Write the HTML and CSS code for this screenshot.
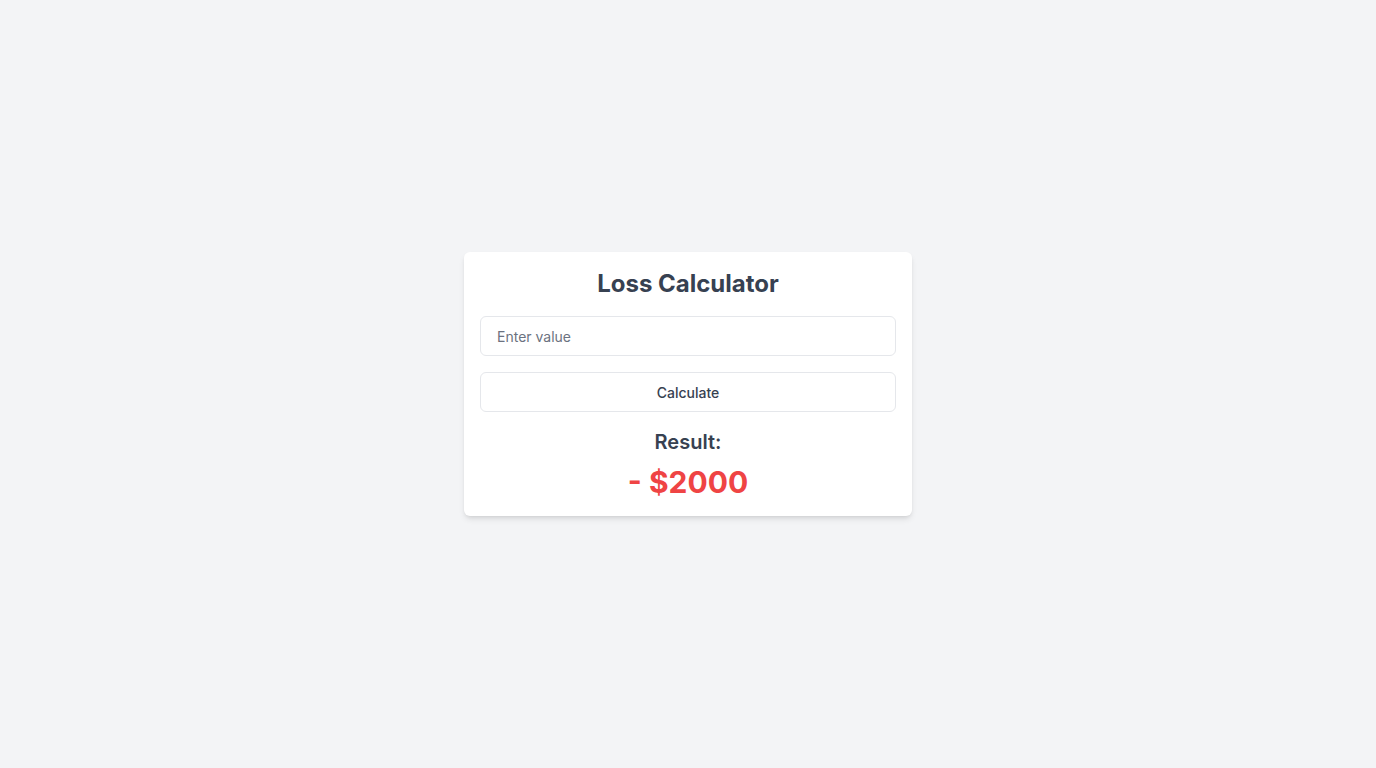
FILE: index.html
```html
<!DOCTYPE html>
<html lang="en">
<head>
<meta charset="utf-8">
<title>Loss Calculator</title>
<link rel="stylesheet" href="styles.css">
</head>
<body>
<main class="page">
  <section class="card">
    <h1 class="title">Loss Calculator</h1>
    <input class="field" type="text" placeholder="Enter value">
    <button class="btn" type="button">Calculate</button>
    <div class="result">
      <h2 class="result-label">Result:</h2>
      <p class="result-value">- $2000</p>
    </div>
  </section>
</main>
</body>
</html>
```

FILE: styles.css
```css
* { box-sizing: border-box; }
html, body { margin: 0; padding: 0; }
body {
  font-family: Inter, "Noto Sans", sans-serif;
  background: #f3f4f6;
  color: #374151;
}
.page {
  min-height: 100vh;
  display: flex;
  align-items: center;
  justify-content: center;
}
.card {
  width: 448px;
  background: #fff;
  border-radius: 6px;
  padding: 16px;
  box-shadow: 0 4px 6px -1px rgba(0,0,0,0.1), 0 2px 4px -2px rgba(0,0,0,0.1);
  display: flex;
  flex-direction: column;
}
.title {
  margin: 0 0 16px;
  font-size: 24px;
  line-height: 32px;
  font-weight: 700;
  text-align: center;
  color: #374151;
}
.field {
  height: 40px;
  width: 100%;
  border: 1px solid #e5e7eb;
  border-radius: 6px;
  padding: 0 16px;
  font-family: inherit;
  font-size: 14px;
  color: #374151;
  background: #fff;
  outline: none;
}
.field::placeholder { color: #6b7280; }
.btn {
  margin-top: 16px;
  height: 40px;
  width: 100%;
  border: 1px solid #e5e7eb;
  border-radius: 6px;
  background: #fff;
  font-family: inherit;
  font-size: 14px;
  font-weight: 500;
  color: #374151;
  cursor: pointer;
}
.result {
  margin-top: 16px;
  text-align: center;
}
.result-label {
  margin: 0;
  font-size: 20px;
  line-height: 28px;
  font-weight: 600;
  color: #374151;
}
.result-value {
  margin: 8px 0 0;
  font-size: 30px;
  line-height: 36px;
  font-weight: 700;
  color: #ef4444;
}
```
